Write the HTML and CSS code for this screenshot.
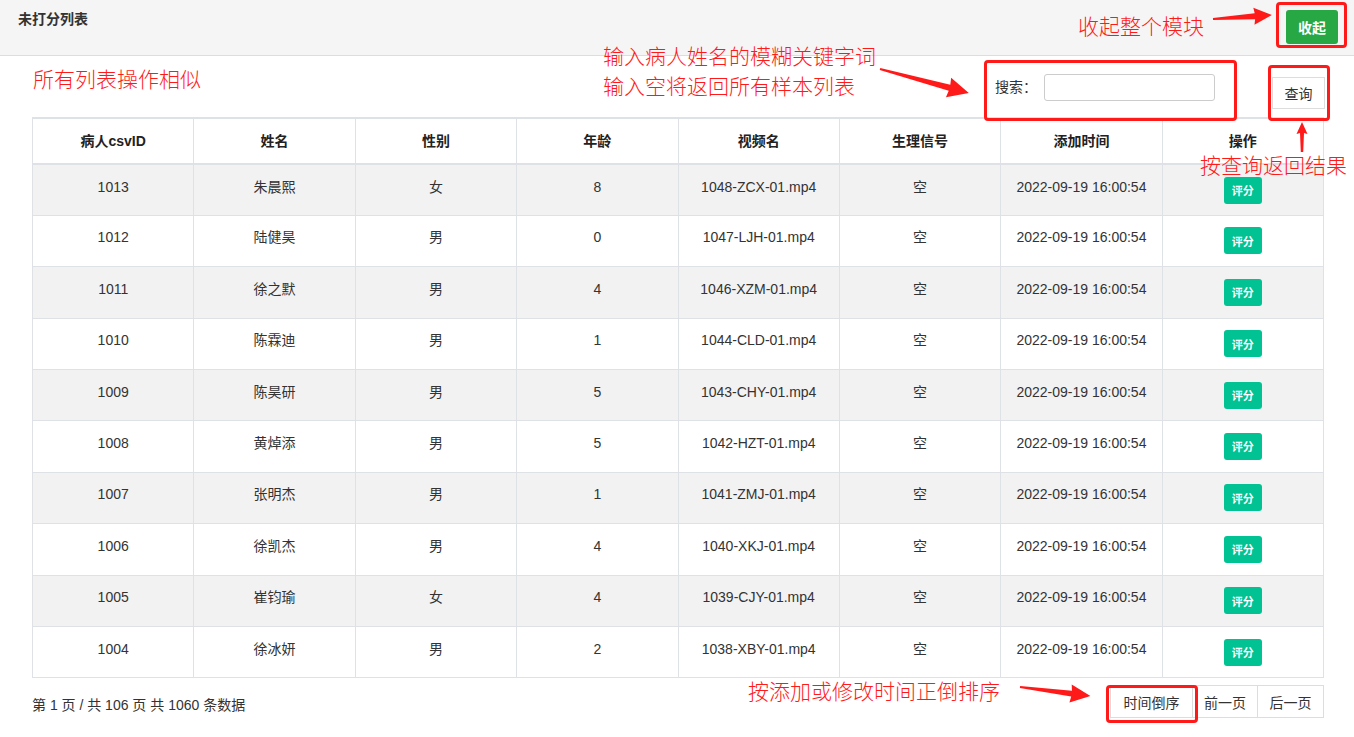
FILE: index.html
```html
<!DOCTYPE html>
<html lang="zh-CN">
<head>
<meta charset="utf-8">
<title>未打分列表</title>
<link rel="stylesheet" href="styles.css">
</head>
<body>
<div class="page">
  <div class="panel-heading">
    <div class="panel-title">未打分列表</div>
    <button class="btn-collapse">收起</button>
  </div>
  <div class="toolbar">
    <label class="search-label">搜索：</label>
    <input class="search-input" type="text">
    <button class="btn-query">查询</button>
  </div>
  <table class="data-table">
    <thead>
      <tr><th>病人csvID</th><th>姓名</th><th>性别</th><th>年龄</th><th>视频名</th><th>生理信号</th><th>添加时间</th><th>操作</th></tr>
    </thead>
    <tbody>
      <tr><td>1013</td><td>朱晨熙</td><td>女</td><td>8</td><td>1048-ZCX-01.mp4</td><td>空</td><td>2022-09-19 16:00:54</td><td><button class="btn-score">评分</button></td></tr>
      <tr><td>1012</td><td>陆健昊</td><td>男</td><td>0</td><td>1047-LJH-01.mp4</td><td>空</td><td>2022-09-19 16:00:54</td><td><button class="btn-score">评分</button></td></tr>
      <tr><td>1011</td><td>徐之默</td><td>男</td><td>4</td><td>1046-XZM-01.mp4</td><td>空</td><td>2022-09-19 16:00:54</td><td><button class="btn-score">评分</button></td></tr>
      <tr><td>1010</td><td>陈霖迪</td><td>男</td><td>1</td><td>1044-CLD-01.mp4</td><td>空</td><td>2022-09-19 16:00:54</td><td><button class="btn-score">评分</button></td></tr>
      <tr><td>1009</td><td>陈昊研</td><td>男</td><td>5</td><td>1043-CHY-01.mp4</td><td>空</td><td>2022-09-19 16:00:54</td><td><button class="btn-score">评分</button></td></tr>
      <tr><td>1008</td><td>黄焯添</td><td>男</td><td>5</td><td>1042-HZT-01.mp4</td><td>空</td><td>2022-09-19 16:00:54</td><td><button class="btn-score">评分</button></td></tr>
      <tr><td>1007</td><td>张明杰</td><td>男</td><td>1</td><td>1041-ZMJ-01.mp4</td><td>空</td><td>2022-09-19 16:00:54</td><td><button class="btn-score">评分</button></td></tr>
      <tr><td>1006</td><td>徐凯杰</td><td>男</td><td>4</td><td>1040-XKJ-01.mp4</td><td>空</td><td>2022-09-19 16:00:54</td><td><button class="btn-score">评分</button></td></tr>
      <tr><td>1005</td><td>崔钧瑜</td><td>女</td><td>4</td><td>1039-CJY-01.mp4</td><td>空</td><td>2022-09-19 16:00:54</td><td><button class="btn-score">评分</button></td></tr>
      <tr><td>1004</td><td>徐冰妍</td><td>男</td><td>2</td><td>1038-XBY-01.mp4</td><td>空</td><td>2022-09-19 16:00:54</td><td><button class="btn-score">评分</button></td></tr>
    </tbody>
  </table>
  <div class="footer">
    <div class="page-info">第 1 页 / 共 106 页 共 1060 条数据</div>
    <div class="pager">
      <button class="pager-btn pager-sort">时间倒序</button><button class="pager-btn pager-prev">前一页</button><button class="pager-btn pager-next">后一页</button>
    </div>
  </div>

  <!-- annotations overlay -->
  <div class="note note-all">所有列表操作相似</div>
  <div class="note note-search">输入病人姓名的模糊关键字词<br>输入空将返回所有样本列表</div>
  <div class="note note-collapse">收起整个模块</div>
  <div class="note note-query">按查询返回结果</div>
  <div class="note note-sort">按添加或修改时间正倒排序</div>

  <div class="mark mark-collapse"></div>
  <div class="mark mark-search"></div>
  <div class="mark mark-query"></div>
  <div class="mark mark-sort"></div>

  <svg class="arrows" width="1354" height="737" viewBox="0 0 1354 737">
    <g fill="#ff1a1a">
      <polygon transform="translate(880,69) rotate(15.1)" points="0,-1 72,-3 71,-10 92,0 71,10 72,3 0,1"/>
      <polygon transform="translate(1213,19) rotate(-3.9)" points="0,-1 42,-3 41,-8.5 59,0 41,8.5 42,3 0,1"/>
      <polygon transform="translate(1302,152) rotate(-90)" points="0,-1.2 19,-2 18,-5.5 30,0 18,5.5 19,2 0,1.2"/>
      <polygon transform="translate(1020,687) rotate(7.3)" points="0,-1 52,-3 51,-9 71,0 51,9 52,3 0,1"/>
    </g>
  </svg>
</div>
</body>
</html>
```
FILE: styles.css
```css
* { box-sizing: border-box; }

body {
  margin: 0;
  background: #fff;
  font-family: "Liberation Sans", "Noto Sans CJK SC", Arial, sans-serif;
  font-size: 14px;
  color: #333;
}

.page {
  position: relative;
  width: 1354px;
  height: 737px;
  overflow: hidden;
}

.panel-heading {
  display: flex;
  justify-content: space-between;
  align-items: flex-start;
  height: 56px;
  background: #f5f5f5;
  border-bottom: 1px solid #ddd;
  padding: 0 16px 0 18px;
}

.panel-title {
  font-weight: bold;
  font-size: 14px;
  line-height: 20px;
  margin-top: 9px;
  color: #333;
}

.btn-collapse {
  margin-top: 10px;
  width: 52px;
  height: 34px;
  border: none;
  border-radius: 3px;
  background: #28a745;
  color: #fff;
  font-family: inherit;
  font-size: 14px;
  font-weight: bold;
  padding: 0;
}

.toolbar {
  display: flex;
  justify-content: flex-end;
  align-items: flex-start;
  height: 61px;
  padding-right: 29px;
}

.search-label {
  margin-top: 18px;
  line-height: 27px;
  font-size: 14px;
  color: #333;
  margin-right: 7px;
}

.search-input {
  margin-top: 18px;
  width: 171px;
  height: 27px;
  border: 1px solid #ccc;
  border-radius: 3px;
  background: #fff;
  outline: none;
}

.btn-query {
  margin-top: 21px;
  margin-left: 57px;
  width: 53px;
  height: 32px;
  border: 1px solid #ddd;
  background: #fff;
  color: #333;
  font-family: inherit;
  font-size: 14px;
  padding: 0;
}

.data-table {
  margin: 0 30px 0 32px;
  width: 1292px;
  table-layout: fixed;
  border-collapse: collapse;
  border: 1px solid #dee2e6;
}

.data-table th,
.data-table td {
  border: 1px solid #dee2e6;
  text-align: center;
  vertical-align: top;
  font-size: 14px;
  line-height: 21px;
}

.data-table th {
  font-weight: bold;
  color: #222;
  padding: 12px 12px 11px;
  border-top-width: 2px;
  border-bottom-width: 2px;
}

.data-table td {
  padding: 11.5px 12px 10.5px;
  color: #333;
  height: 51.4px;
}

.data-table tbody tr:nth-child(odd) td {
  background: #f2f2f2;
}

.btn-score {
  display: inline-block;
  width: 38px;
  height: 27px;
  border: none;
  border-radius: 3px;
  background: #00c292;
  color: #fff;
  font-family: inherit;
  font-size: 11px;
  font-weight: bold;
  padding: 0;
  vertical-align: top;
}

.footer {
  display: flex;
  justify-content: space-between;
  align-items: flex-start;
  margin-top: 7px;
  padding: 0 30px 0 32px;
}

.page-info {
  margin-top: 10px;
  font-size: 14px;
  line-height: 20px;
  color: #333;
}

.pager {
  display: flex;
}

.pager-btn {
  height: 33px;
  border: 1px solid #ddd;
  background: #fff;
  color: #333;
  font-family: inherit;
  font-size: 14px;
  padding: 0;
}

.pager-btn + .pager-btn { border-left: none; }

.pager-sort { width: 83px; }
.pager-prev { width: 65px; }
.pager-next { width: 66px; }

/* annotation overlays */
.note {
  position: absolute;
  color: #ff1a1a;
  font-family: "Noto Sans CJK SC", sans-serif;
  font-size: 21px;
  line-height: 30px;
  white-space: nowrap;
  font-weight: 300;
}

.note-all { left: 33px; top: 63px; }
.note-search { left: 603px; top: 40px; }
.note-collapse { left: 1078px; top: 10px; }
.note-query { left: 1200px; top: 149px; }
.note-sort { left: 748px; top: 675px; }

.mark {
  position: absolute;
  border: 3px solid #ff1a1a;
  border-radius: 4px;
}

.mark-collapse { left: 1276px; top: 2px; width: 71px; height: 46px; }
.mark-search { left: 984px; top: 60px; width: 253px; height: 61px; }
.mark-query { left: 1268px; top: 65px; width: 62px; height: 56px; }
.mark-sort { left: 1106px; top: 685px; width: 92px; height: 38px; }

.arrows {
  position: absolute;
  left: 0;
  top: 0;
  pointer-events: none;
}
```
